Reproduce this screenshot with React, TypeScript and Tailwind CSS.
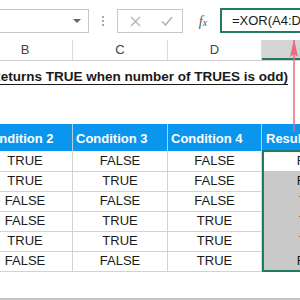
const rows = [
  ["TRUE", "FALSE", "FALSE", "FALSE"],
  ["TRUE", "TRUE", "FALSE", "FALSE"],
  ["FALSE", "FALSE", "FALSE", "TRUE"],
  ["FALSE", "TRUE", "TRUE", "TRUE"],
  ["TRUE", "TRUE", "TRUE", "TRUE"],
  ["FALSE", "FALSE", "TRUE", "FALSE"],
];

const cols = "grid grid-cols-[95px_95px_94px_110px] ml-[-22px]";

export default function App() {
  return (
    <div className="relative w-[300px] h-[300px] overflow-hidden bg-white font-['Liberation_Sans',Arial,sans-serif] text-[#1a1a1a]">
      {/* formula bar */}
      <div className="h-[40px] flex items-start pt-[9px]">
        <div className="ml-[-20px] w-[109px] shrink-0 h-[24px] border border-[#c6c6c6] flex items-center justify-end pr-[7px]">
          <span className="w-0 h-0 border-l-[4px] border-r-[4px] border-t-[4px] border-l-transparent border-r-transparent border-t-[#666]" />
        </div>
        <div className="w-[28px] shrink-0 h-[24px] flex flex-col items-center justify-center gap-[2px]">
          <span className="w-[2px] h-[2px] bg-[#a8a8a8]" />
          <span className="w-[2px] h-[2px] bg-[#a8a8a8]" />
          <span className="w-[2px] h-[2px] bg-[#a8a8a8]" />
        </div>
        <div className="w-[66px] shrink-0 h-[24px] border border-[#c6c6c6] flex items-center pl-[12px] gap-[20px]">
          <svg width="11" height="11" viewBox="0 0 11 11">
            <path d="M1 1L10 10M10 1L1 10" stroke="#b4b4b4" strokeWidth="1.3" />
          </svg>
          <svg width="12" height="10" viewBox="0 0 12 10">
            <path d="M1 5.5L4.5 9L11 1" stroke="#b4b4b4" strokeWidth="1.6" fill="none" />
          </svg>
        </div>
        <div className="w-[37px] shrink-0 h-[24px] flex items-center justify-center font-['Liberation_Serif',serif] italic text-[14px] text-[#555] pl-[3px]">
          f<span className="text-[10px] mt-[3px]">x</span>
        </div>
        <div className="w-[110px] shrink-0 h-[25px] mt-[-1px] border-2 border-[#217a62] flex items-center pl-[10px] text-[13px] whitespace-nowrap">
          =XOR(A4:D4)
        </div>
      </div>

      {/* column letters */}
      <div className={`${cols} h-[21px] border-b border-[#cfcfcf] text-[13px] text-[#444]`}>
        <div className="flex items-center justify-center border-r border-[#dadada]">B</div>
        <div className="flex items-center justify-center border-r border-[#dadada]">C</div>
        <div className="flex items-center justify-center border-r border-[#dadada]">D</div>
        <div className="bg-[#d4d4d4] border-b-2 border-[#217a62]" />
      </div>

      {/* title */}
      <div className="h-[30px] flex items-end pb-[4px] justify-end pr-[12px] whitespace-nowrap">
        <span className="font-bold text-[13.5px] underline underline-offset-[3px]">
          Returns TRUE when number of TRUES is odd)
        </span>
      </div>

      <div className="h-[33px]" />

      {/* table header */}
      <div className={`${cols} h-[27px] bg-[#0a96ee] text-white font-bold text-[13px]`}>
        <div className="flex items-end pb-[3px] pl-[4px] border-r border-[#bfcbd6] whitespace-nowrap">Condition 2</div>
        <div className="flex items-end pb-[3px] pl-[3px] border-r border-[#bfcbd6] whitespace-nowrap">Condition 3</div>
        <div className="flex items-end pb-[3px] pl-[3px] border-r border-[#bfcbd6] whitespace-nowrap">Condition 4</div>
        <div className="flex items-end pb-[3px] pl-[4px] whitespace-nowrap">Result</div>
      </div>

      {/* data rows */}
      <div className="relative">
        {rows.map((r, i) => (
          <div key={i} className={`${cols} h-[20px] text-[13px]`}>
            <div className="flex items-center justify-center border-r border-b border-[#d2d2d2]">{r[0]}</div>
            <div className="flex items-center justify-center border-r border-b border-[#d2d2d2]">{r[1]}</div>
            <div className="flex items-center justify-center border-r border-b border-[#d2d2d2]">{r[2]}</div>
            <div
              className={
                i === 0
                  ? "flex items-center justify-center border-b border-[#d2d2d2] bg-white"
                  : "flex items-center justify-center border-b border-[#a4a4a4] bg-[#c9c9c9]"
              }
            >
              {r[3]}
            </div>
          </div>
        ))}
        <div className="absolute left-[262px] top-[-1px] w-[60px] h-[122px] border-2 border-[#217a62] pointer-events-none" />
      </div>

      {/* bottom edge */}
      <div className="absolute left-0 bottom-0 w-full h-[2px] bg-[#c4c4c4]" />

      {/* arrow */}
      <svg className="absolute left-[289px] top-[36px]" width="10" height="97" viewBox="0 0 10 97">
        <path d="M5 4V96" stroke="#ea6a80" strokeWidth="1.5" />
        <path d="M5 3L9 21L5 18L1 21Z" fill="#ea6a80" />
      </svg>
    </div>
  );
}
